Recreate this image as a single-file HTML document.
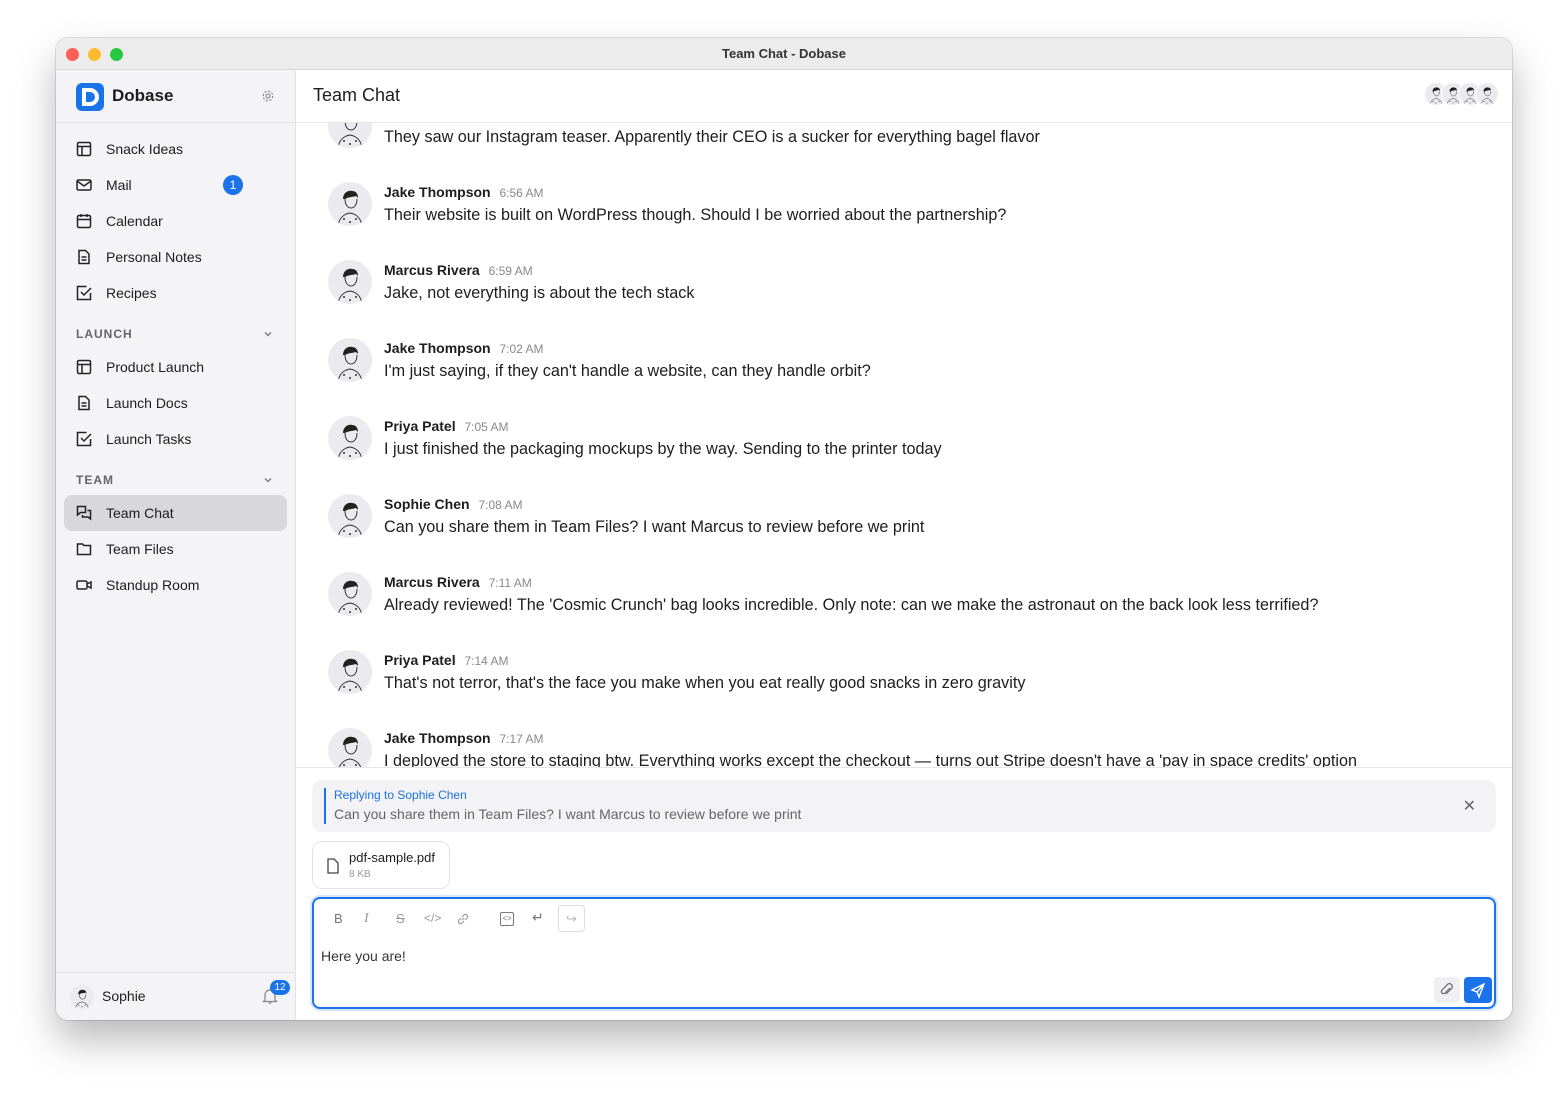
<!DOCTYPE html>
<html><head><meta charset="utf-8"><style>
*{box-sizing:border-box;margin:0;padding:0}
body{width:1568px;height:1095px;background:#fff;font-family:"Liberation Sans",sans-serif;position:relative;overflow:hidden;color:#1d1d1f}
.win{position:absolute;left:56px;top:38px;width:1456px;height:982px;border-radius:12px;overflow:hidden;background:#fff;box-shadow:0 20px 40px rgba(0,0,0,.28),0 0 0 1px rgba(0,0,0,.12)}
.tb{position:absolute;left:0;top:0;width:100%;height:32px;background:#ececec;border-bottom:1px solid #d8d8d8;text-align:center;font-size:13px;font-weight:bold;line-height:32px;color:#333}
.dot{position:absolute;top:10px;width:13px;height:13px;border-radius:50%}
.sb{position:absolute;left:0;top:32px;width:240px;bottom:0;background:#f4f4f6;border-right:1px solid #e3e3e6}
.it{position:absolute;left:20px;height:20px;font-size:14px;line-height:20px;display:flex;align-items:center;color:#1d1d1f}
.it svg{width:16px;height:16px;margin-right:14px;fill:none;stroke:#222;stroke-width:1.5}
.sec{position:absolute;left:20px;font-size:12px;letter-spacing:1px;color:#666;font-weight:bold}
.chev{position:absolute;right:22px;width:10px;height:10px}
.main{position:absolute;left:240px;top:32px;right:0;bottom:0}
.msgs{position:absolute;left:0;top:53px;right:0;height:644px;overflow:hidden}
.m{position:absolute;left:32px}
.av{position:absolute;left:0;top:0;width:44px;height:44px;border-radius:50%;background:#ebebef;overflow:hidden}
.av svg{width:100%;height:100%}
.nm{position:absolute;left:56px;top:2px;font-size:14px;font-weight:bold;white-space:nowrap}
.nm span{font-weight:normal;color:#888;font-size:12px;margin-left:5px}
.tx{position:absolute;left:56px;top:24px;font-size:16.2px;white-space:nowrap;color:#1d1d1f}
</style></head><body>
<svg width="0" height="0" style="position:absolute"><defs><g id="f"><path d="M15 17c0-6 5-9 9-8 4 0 6 3 6 7l-2-2c-3 1-8 1-11 3z" fill="#222"/><path d="M17 17c0 6 3 9 6 9s6-3 6-9" fill="none" stroke="#333" stroke-width="1"/><path d="M10 44c1-8 6-12 12-13 6 1 11 5 12 13" fill="none" stroke="#333" stroke-width="1"/><circle cx="16" cy="37" r="1" fill="#333"/><circle cx="22" cy="40" r="1" fill="#333"/><circle cx="28" cy="37" r="1" fill="#333"/></g></defs></svg>
<div class="win">
<div class="tb">Team Chat - Dobase
<div class="dot" style="left:10px;background:#fe5f57"></div><div class="dot" style="left:32px;background:#febc2e"></div><div class="dot" style="left:54px;background:#28c840"></div></div>
<div class="sb">
 <div style="position:absolute;left:20px;top:13px;width:28px;height:28px;border-radius:6px;background:#1a73e8"><svg width="28" height="28" viewBox="0 0 28 28"><path d="M8 7h6a7 7 0 0 1 0 14h-6z" fill="none" stroke="#fff" stroke-width="4"/></svg></div>
 <div style="position:absolute;left:56px;top:16px;font-size:17px;font-weight:bold">Dobase</div>
 <svg style="position:absolute;left:205px;top:19px" width="14" height="14" viewBox="0 0 16 16" fill="none" stroke="#888" stroke-width="1.3"><circle cx="8" cy="8" r="2.3"/><circle cx="8" cy="8" r="5.5" stroke-dasharray="2.5 1.8"/></svg>
 <div style="position:absolute;left:0;right:0;top:52px;border-top:1px solid #e3e3e6"></div>
 <div class="it" style="top:69px"><svg viewBox="0 0 16 16"><rect x="1.5" y="1.5" width="13" height="13" rx="1.5"/><path d="M1.5 5.5h13M6 5.5v9"/></svg>Snack Ideas</div>
 <div class="it" style="top:105px"><svg viewBox="0 0 16 16"><rect x="1" y="3" width="14" height="10" rx="1.5"/><path d="M1 4l7 5 7-5"/></svg>Mail</div>
 <div style="position:absolute;left:167px;top:105px;width:20px;height:20px;border-radius:50%;background:#1a73e8;color:#fff;font-size:12px;text-align:center;line-height:20px">1</div>
 <div class="it" style="top:141px"><svg viewBox="0 0 16 16"><rect x="1.5" y="2.5" width="13" height="12" rx="1.5"/><path d="M1.5 6.5h13M5 1v3M11 1v3"/></svg>Calendar</div>
 <div class="it" style="top:177px"><svg viewBox="0 0 16 16"><path d="M3 1.5h6.5l3.5 3.5v9.5h-10z"/><path d="M5.5 8h5M5.5 11h5"/></svg>Personal Notes</div>
 <div class="it" style="top:213px"><svg viewBox="0 0 16 16"><path d="M14.5 8v6.5h-13v-13h9"/><path d="M5 7l3 3 7-7"/></svg>Recipes</div>
 <div class="sec" style="top:257px">LAUNCH</div><svg class="chev" style="top:259px" viewBox="0 0 10 10" fill="none" stroke="#777" stroke-width="1.3"><path d="M2 3.5l3 3 3-3"/></svg>
 <div class="it" style="top:287px"><svg viewBox="0 0 16 16"><rect x="1.5" y="1.5" width="13" height="13" rx="1.5"/><path d="M1.5 5.5h13M6 5.5v9"/></svg>Product Launch</div>
 <div class="it" style="top:323px"><svg viewBox="0 0 16 16"><path d="M3 1.5h6.5l3.5 3.5v9.5h-10z"/><path d="M5.5 8h5M5.5 11h5"/></svg>Launch Docs</div>
 <div class="it" style="top:359px"><svg viewBox="0 0 16 16"><path d="M14.5 8v6.5h-13v-13h9"/><path d="M5 7l3 3 7-7"/></svg>Launch Tasks</div>
 <div class="sec" style="top:403px">TEAM</div><svg class="chev" style="top:405px" viewBox="0 0 10 10" fill="none" stroke="#777" stroke-width="1.3"><path d="M2 3.5l3 3 3-3"/></svg>
 <div style="position:absolute;left:8px;top:425px;width:223px;height:36px;border-radius:8px;background:#d7d7dc"></div>
 <div class="it" style="top:433px"><svg viewBox="0 0 16 16"><path d="M1.5 1.5h8v6h-5l-3 2.5z"/><path d="M11.5 5.5h3v8.5l-2.5-2h-5.5v-2"/></svg>Team Chat</div>
 <div class="it" style="top:469px"><svg viewBox="0 0 16 16"><path d="M1.5 3h5l1.5 1.5h6.5v9h-13z"/></svg>Team Files</div>
 <div class="it" style="top:505px"><svg viewBox="0 0 16 16"><rect x="1" y="4" width="10" height="8" rx="1.5"/><path d="M11 7l4-2v6l-4-2"/></svg>Standup Room</div>
 <div style="position:absolute;left:0;right:0;top:902px;border-top:1px solid #e3e3e6"></div>
 <div class="av" style="left:14px;top:915px;width:24px;height:24px"><svg viewBox="0 0 44 44"><use href="#f"/></svg></div>
 <div style="position:absolute;left:46px;top:918px;font-size:14px">Sophie</div>
 <svg style="position:absolute;left:206px;top:917px" width="16" height="18" viewBox="0 0 16 18" fill="none" stroke="#888" stroke-width="1.3"><path d="M3 13V8a5 5 0 0 1 10 0v5l1.5 1.5h-13z M6.5 16h3"/></svg>
 <div style="position:absolute;left:214px;top:910px;width:20px;height:15px;border-radius:8px;background:#1a73e8;color:#fff;font-size:10px;text-align:center;line-height:15px">12</div>
</div>
<div class="main">
 <div style="position:absolute;left:17px;top:15px;font-size:18px;color:#1d1d1f">Team Chat</div>
 <div class="av" style="left:1128px;top:12px;width:24px;height:24px;border:1px solid #fff"><svg viewBox="0 0 44 44"><use href="#f"/></svg></div><div class="av" style="left:1145px;top:12px;width:24px;height:24px;border:1px solid #fff"><svg viewBox="0 0 44 44"><use href="#f"/></svg></div><div class="av" style="left:1162px;top:12px;width:24px;height:24px;border:1px solid #fff"><svg viewBox="0 0 44 44"><use href="#f"/></svg></div><div class="av" style="left:1179px;top:12px;width:24px;height:24px;border:1px solid #fff"><svg viewBox="0 0 44 44"><use href="#f"/></svg></div>
 <div style="position:absolute;left:0;right:0;top:52px;border-top:1px solid #e6e6ea"></div>
 <div class="msgs">
  <div class="m" style="top:-19px"><div class="av"><svg viewBox="0 0 44 44"><use href="#f"/></svg></div><div class="nm">Sophie Chen <span>6:53 AM</span></div><div class="tx">They saw our Instagram teaser. Apparently their CEO is a sucker for everything bagel flavor</div></div>
  <div class="m" style="top:59px"><div class="av"><svg viewBox="0 0 44 44"><use href="#f"/></svg></div><div class="nm">Jake Thompson <span>6:56 AM</span></div><div class="tx">Their website is built on WordPress though. Should I be worried about the partnership?</div></div>
  <div class="m" style="top:137px"><div class="av"><svg viewBox="0 0 44 44"><use href="#f"/></svg></div><div class="nm">Marcus Rivera <span>6:59 AM</span></div><div class="tx">Jake, not everything is about the tech stack</div></div>
  <div class="m" style="top:215px"><div class="av"><svg viewBox="0 0 44 44"><use href="#f"/></svg></div><div class="nm">Jake Thompson <span>7:02 AM</span></div><div class="tx">I'm just saying, if they can't handle a website, can they handle orbit?</div></div>
  <div class="m" style="top:293px"><div class="av"><svg viewBox="0 0 44 44"><use href="#f"/></svg></div><div class="nm">Priya Patel <span>7:05 AM</span></div><div class="tx">I just finished the packaging mockups by the way. Sending to the printer today</div></div>
  <div class="m" style="top:371px"><div class="av"><svg viewBox="0 0 44 44"><use href="#f"/></svg></div><div class="nm">Sophie Chen <span>7:08 AM</span></div><div class="tx">Can you share them in Team Files? I want Marcus to review before we print</div></div>
  <div class="m" style="top:449px"><div class="av"><svg viewBox="0 0 44 44"><use href="#f"/></svg></div><div class="nm">Marcus Rivera <span>7:11 AM</span></div><div class="tx">Already reviewed! The 'Cosmic Crunch' bag looks incredible. Only note: can we make the astronaut on the back look less terrified?</div></div>
  <div class="m" style="top:527px"><div class="av"><svg viewBox="0 0 44 44"><use href="#f"/></svg></div><div class="nm">Priya Patel <span>7:14 AM</span></div><div class="tx">That's not terror, that's the face you make when you eat really good snacks in zero gravity</div></div>
  <div class="m" style="top:605px"><div class="av"><svg viewBox="0 0 44 44"><use href="#f"/></svg></div><div class="nm">Jake Thompson <span>7:17 AM</span></div><div class="tx">I deployed the store to staging btw. Everything works except the checkout — turns out Stripe doesn't have a 'pay in space credits' option</div></div>
 </div>
 <div style="position:absolute;left:0;right:0;top:697px;border-top:1px solid #e6e6ea"></div>
 <div style="position:absolute;left:16px;top:710px;width:1184px;height:52px;border-radius:10px;background:#f3f3f5">
  <div style="position:absolute;left:12px;top:8px;width:2px;height:36px;background:#1a73e8"></div>
  <div style="position:absolute;left:22px;top:8px;font-size:12px;color:#1a73e8">Replying to Sophie Chen</div>
  <div style="position:absolute;left:22px;top:26px;font-size:14px;color:#666">Can you share them in Team Files? I want Marcus to review before we print</div>
  <div style="position:absolute;right:20px;top:16px;font-size:16px;color:#666">✕</div>
 </div>
 <div style="position:absolute;left:16px;top:771px;width:138px;height:48px;border-radius:10px;border:1px solid #e3e3e6">
  <svg style="position:absolute;left:14px;top:16px" width="12" height="16" viewBox="0 0 12 16" fill="none" stroke="#444" stroke-width="1.3"><path d="M1 1h6l4 4v10H1z"/></svg>
  <div style="position:absolute;left:36px;top:8px;font-size:13px">pdf-sample.pdf</div>
  <div style="position:absolute;left:36px;top:27px;font-size:10px;color:#999">8 KB</div>
 </div>
 <div style="position:absolute;left:16px;top:827px;width:1184px;height:112px;border-radius:8px;border:2px solid #1a73e8;box-shadow:0 0 0 2px #d8e6fb">
  <div style="position:absolute;left:20px;top:12px;font-size:13px;color:#777">B</div>
  <div style="position:absolute;left:50px;top:12px;font-size:14px;color:#999;font-style:italic;font-family:'Liberation Serif',serif">I</div>
  <div style="position:absolute;left:82px;top:12px;font-size:13px;color:#999;text-decoration:line-through">S</div>
  <div style="position:absolute;left:110px;top:12px;font-size:12px;color:#999">&lt;/&gt;</div>
  <svg style="position:absolute;left:142px;top:13px" width="14" height="14" viewBox="0 0 14 14" fill="none" stroke="#999" stroke-width="1.2"><path d="M6 8l2-2M5 6L3 8a2 2 0 0 0 3 3l2-2M9 8l2-2a2 2 0 0 0-3-3L6 5"/></svg>
  <div style="position:absolute;left:186px;top:13px;width:14px;height:14px;border:1px solid #777;border-radius:2px;font-size:8px;text-align:center;line-height:12px;color:#777">&lt;&gt;</div>
  <div style="position:absolute;left:218px;top:10px;font-size:14px;color:#777">↵</div>
  <div style="position:absolute;left:244px;top:6px;width:27px;height:27px;border:1px solid #ddd;border-radius:4px;font-size:13px;text-align:center;line-height:25px;color:#bbb">↪</div>
  <div style="position:absolute;left:7px;top:49px;font-size:14px;color:#333">Here you are!</div>
  <div style="position:absolute;right:34px;top:78px;width:26px;height:26px;border-radius:4px;background:#f0f0f2"><svg width="26" height="26" viewBox="0 0 26 26" fill="none" stroke="#666" stroke-width="1.2"><path d="M16 11l-5 5a2 2 0 0 1-3-3l6-6a3 3 0 0 1 4 4l-6 6"/></svg></div>
  <div style="position:absolute;right:2px;top:78px;width:28px;height:26px;border-radius:4px;background:#1a73e8"><svg width="28" height="26" viewBox="0 0 28 26" fill="none" stroke="#fff" stroke-width="1.4"><path d="M8 13l12-6-5 13-2-5z M13 15l7-8"/></svg></div>
 </div>
</div>
</div>
</body></html>
